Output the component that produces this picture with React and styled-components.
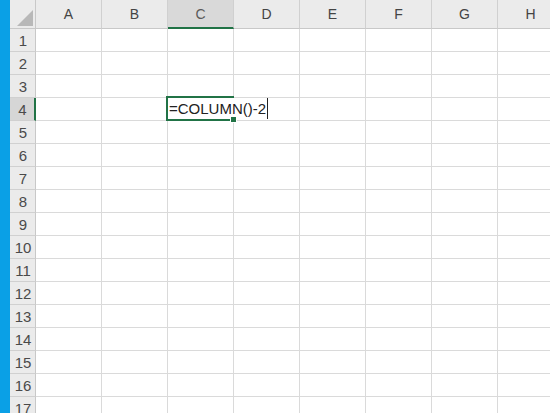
import React from "react";
import styled, { createGlobalStyle } from "styled-components";

const COLS = ["A", "B", "C", "D", "E", "F", "G", "H"];
const ROWS = Array.from({ length: 17 }, (_, i) => i + 1);
const ACTIVE_COL = "C";
const ACTIVE_ROW = 4;

export default function App() {
  return (
    <>
      <GlobalStyle />
      <Window>
        <SideBar />
        <Sheet>
          <Corner>
            <svg width="26" height="29" viewBox="0 0 26 29">
              <polygon points="7,26 23,26 23,10" fill="#b8b8b8" />
            </svg>
          </Corner>
          {COLS.map((c) => (
            <ColHeader key={c} $active={c === ACTIVE_COL}>
              {c}
            </ColHeader>
          ))}
          {ROWS.map((r) => (
            <React.Fragment key={r}>
              <RowHeader $active={r === ACTIVE_ROW}>{r}</RowHeader>
              {COLS.map((c) => (
                <Cell key={c}>
                  {r === ACTIVE_ROW && c === ACTIVE_COL && (
                    <Editor>
                      <EditText>
                        =COLUMN()-2
                        <Caret />
                      </EditText>
                      <FillHandle />
                    </Editor>
                  )}
                </Cell>
              ))}
            </React.Fragment>
          ))}
        </Sheet>
      </Window>
    </>
  );
}

const GlobalStyle = createGlobalStyle`
  html, body {
    margin: 0;
    padding: 0;
    background: #fff;
    overflow: hidden;
  }
`;

const Window = styled.div`
  display: flex;
  width: 550px;
  height: 413px;
  overflow: hidden;
  font-family: "Liberation Sans", Arial, sans-serif;
`;

const SideBar = styled.div`
  flex: 0 0 10px;
  background: #0aa0e6;
`;

const Sheet = styled.div`
  display: grid;
  grid-template-columns: 26px repeat(8, 66px);
  grid-template-rows: 29px repeat(17, 23px);
  background: #fff;
`;

const Corner = styled.div`
  background: #ebebeb;
  border-right: 1px solid #c8c8c8;
  border-bottom: 1px solid #c8c8c8;
  box-sizing: border-box;
  svg {
    display: block;
  }
`;

const ColHeader = styled.div`
  display: flex;
  align-items: center;
  justify-content: center;
  box-sizing: border-box;
  background: ${(p) => (p.$active ? "#d9d9d9" : "#ebebeb")};
  border-right: 1px solid #d0d0d0;
  border-bottom: ${(p) => (p.$active ? "2px solid #217346" : "1px solid #c8c8c8")};
  color: ${(p) => (p.$active ? "#5a5a5a" : "#444")};
  font-size: 14px;
  padding-top: ${(p) => (p.$active ? "1px" : "0")};
`;

const RowHeader = styled.div`
  display: flex;
  align-items: center;
  justify-content: center;
  box-sizing: border-box;
  background: ${(p) => (p.$active ? "#d6d6d6" : "#ebebeb")};
  border-right: ${(p) => (p.$active ? "2px solid #217346" : "1px solid #c8c8c8")};
  border-bottom: 1px solid #d0d0d0;
  color: #4a4a4a;
  font-size: 15px;
  padding-left: 1px;
`;

const Cell = styled.div`
  position: relative;
  box-sizing: border-box;
  border-right: 1px solid #dadada;
  border-bottom: 1px solid #dadada;
`;

const Editor = styled.div`
  position: absolute;
  left: -2px;
  top: -2px;
  width: 68px;
  height: 25px;
  box-sizing: border-box;
  border: 2px solid #217346;
  border-right: none;
  z-index: 2;
`;

const EditText = styled.div`
  position: absolute;
  left: 0;
  top: 0;
  height: 21px;
  display: flex;
  align-items: center;
  padding-left: 1px;
  background: #fff;
  color: #222;
  font-size: 15px;
  white-space: nowrap;
`;

const Caret = styled.span`
  display: inline-block;
  width: 1px;
  height: 21px;
  margin-left: 1px;
  background: #222;
`;

const FillHandle = styled.span`
  position: absolute;
  right: -3px;
  bottom: -4px;
  width: 5px;
  height: 5px;
  background: #217346;
  border: 1px solid #fff;
`;
